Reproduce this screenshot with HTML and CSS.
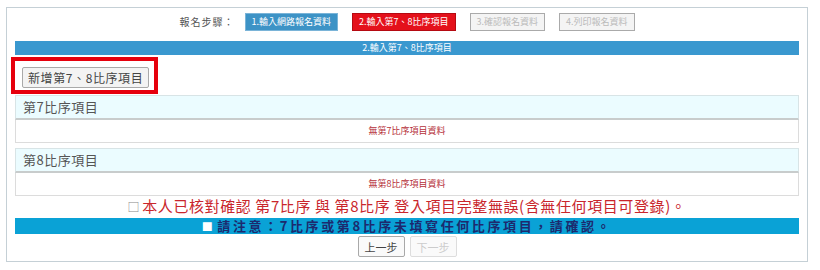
FILE: index.html
```html
<!DOCTYPE html>
<html lang="zh-Hant">
<head>
    <meta charset="UTF-8">
    <title>輸入第7、8比序項目</title>
    <link rel="stylesheet" href="styles.css">
</head>
<body>
    <div class="page">
        <!-- 報名步驟 -->
        <div class="steps">
            <span class="steps-label">報名步驟：</span>
            <span class="step done">1.輸入網路報名資料</span>
            <span class="step current">2.輸入第7、8比序項目</span>
            <span class="step todo">3.確認報名資料</span>
            <span class="step todo">4.列印報名資料</span>
        </div>

        <div class="title-bar">2.輸入第7、8比序項目</div>

        <div class="add-row">
            <div class="highlight">
                <button class="btn add-btn" type="button">新增第7、8比序項目</button>
            </div>
        </div>

        <!-- 第7比序 -->
        <div class="section">
            <div class="section-head">第7比序項目</div>
            <div class="section-empty">無第7比序項目資料</div>
        </div>

        <!-- 第8比序 -->
        <div class="section">
            <div class="section-head">第8比序項目</div>
            <div class="section-empty">無第8比序項目資料</div>
        </div>

        <div class="confirm"><span class="box">□</span>本人已核對確認 第7比序 與 第8比序 登入項目完整無誤(含無任何項目可登錄)。</div>
        <div class="notice"><span class="sq">■</span>請注意：7比序或第8比序未填寫任何比序項目，請確認。</div>

        <div class="nav">
            <button class="btn nav-btn" type="button">上一步</button>
            <button class="btn nav-btn" type="button" disabled>下一步</button>
        </div>
    </div>
</body>
</html>
```

FILE: styles.css
```css
body {
    margin: 0;
    padding: 7px 0 0 6px;
    background-color: #fff;
    font-family: "Noto Sans CJK TC", "Noto Sans", sans-serif;
    color: #555;
}
.page {
    width: 802px;
    box-sizing: border-box;
    border: 1px solid #c5d0d6;
    padding: 4px 8px 4px 8px;
}
.steps {
    display: flex;
    justify-content: center;
    align-items: center;
    gap: 14px;
    height: 19px;
}
.steps-label {
    font-size: 10px;
    letter-spacing: 1px;
    margin-right: -4px;
    color: #555;
}
.step {
    font-size: 9px;
    line-height: 16px;
    height: 16px;
    padding: 0 6px;
    border: 1px solid transparent;
    white-space: nowrap;
}
.step.done {
    background-color: #3d93c6;
    border-color: #7ab4d8;
    color: #fff;
}
.step.current {
    background-color: #e4111b;
    border-color: #b50a12;
    color: #fff;
}
.step.todo {
    background-color: #f4f4f4;
    border-color: #aaa;
    color: #bbb;
}
.title-bar {
    margin-top: 10px;
    height: 14px;
    line-height: 14px;
    background-color: #3a98cf;
    color: #fff;
    font-size: 9px;
    text-align: center;
}
.add-row {
    display: flex;
}
.highlight {
    margin: 2px 0 0 -4px;
    border: 4px solid #e6000d;
    padding: 3px 5px 2px 7px;
}
.btn {
    font-family: inherit;
    background-color: #f3f3f3;
    border: 1px solid #a9a9a9;
    border-radius: 2px;
    color: #444;
    cursor: pointer;
}
.add-btn {
    font-size: 12px;
    height: 21px;
    line-height: 17px;
    padding: 0 5px;
    letter-spacing: 0.6px;
}
.section {
    margin-top: 1px;
}
.section + .section {
    margin-top: 5px;
}
.section-head {
    height: 22px;
    line-height: 22px;
    background-color: #ebfcff;
    border: 1px solid #d8e4e6;
    border-bottom: 2px solid #c8cccc;
    padding-left: 7px;
    font-size: 13px;
    letter-spacing: 0.5px;
    color: #555;
}
.section-empty {
    height: 22px;
    line-height: 22px;
    border: 1px solid #dcdcdc;
    border-top: none;
    text-align: center;
    font-size: 9px;
    color: #b5303a;
}
.confirm {
    height: 19px;
    line-height: 19px;
    padding-bottom: 3px;
    text-align: center;
    font-size: 15px;
    letter-spacing: 0.6px;
    color: #c9262c;
}
.confirm .box {
    font-size: 12px;
    color: #888;
    margin-right: 2px;
}
.notice {
    height: 16px;
    line-height: 16px;
    background-color: #0aa2d6;
    text-align: center;
    font-size: 13px;
    font-weight: bold;
    letter-spacing: 2.6px;
    color: #1c2a6e;
}
.notice .sq {
    color: #fff;
    font-size: 11px;
    margin-right: 2px;
}
.nav {
    display: flex;
    justify-content: center;
    gap: 5px;
    margin-top: 2px;
}
.nav-btn {
    font-size: 11px;
    height: 21px;
    padding: 0 6px;
    background-color: #fafafa;
}
.nav-btn:disabled {
    color: #ccc;
    border-color: #ddd;
    cursor: default;
}
```
